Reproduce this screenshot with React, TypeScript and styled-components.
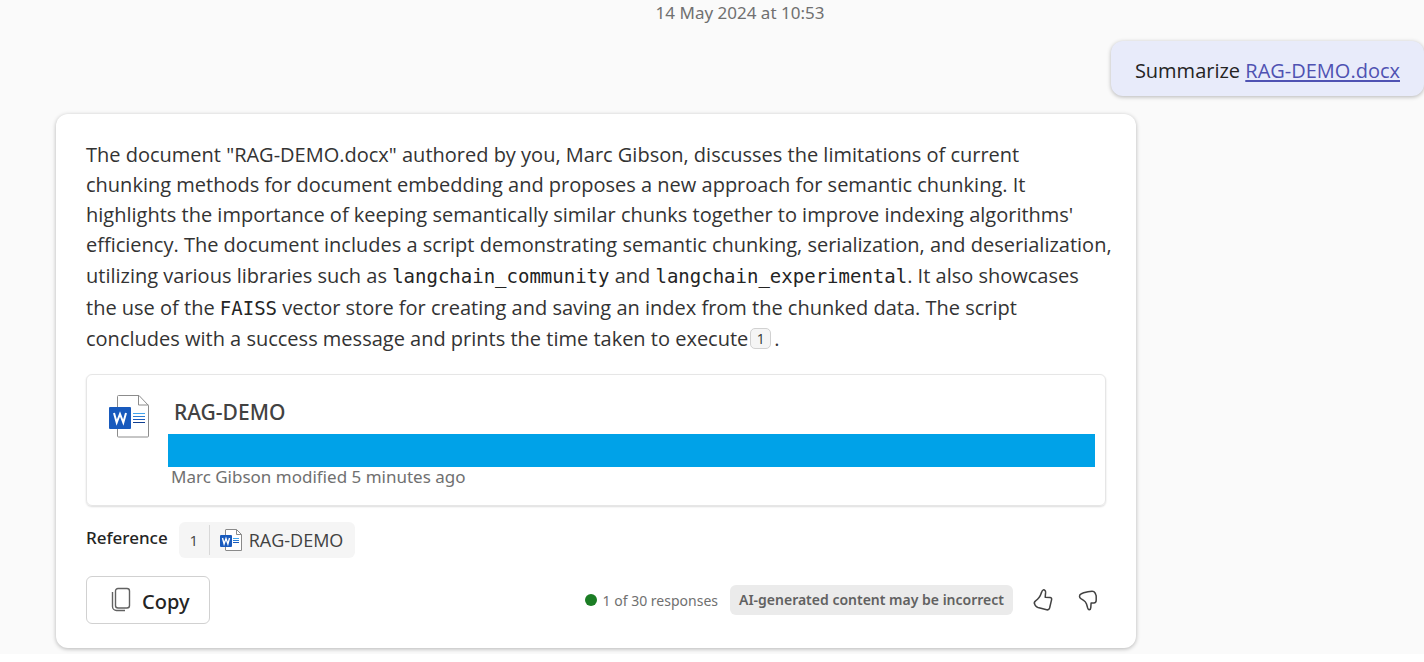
import React from "react";
import styled, { createGlobalStyle } from "styled-components";

const Global = createGlobalStyle`
  * { box-sizing: border-box; }
  html { background: #ffffff; }
  body { margin: 0; font-family: "Noto Sans", "Open Sans", sans-serif; color: #242424; }
`;

const Chat = styled.main`
  display: flex;
  flex-direction: column;
  background: #fafafa;
  padding: 0 0 6px 56px;
`;

const Stamp = styled.time`
  align-self: center;
  margin-right: 56px;
  padding-left: 56px;
  font-size: 17px;
  line-height: 26px;
  color: #707070;
`;

const Prompt = styled.div`
  align-self: flex-end;
  margin-top: 15px;
  padding: 17px 24px 12px;
  border-radius: 12px;
  background: #e8ebfa;
  box-shadow: 0 1px 4px rgba(0, 0, 0, 0.28);
  font-family: "Open Sans", sans-serif;
  font-size: 20px;
  line-height: 26px;
`;

const DocLink = styled.a`
  color: #4f52b2;
  text-decoration: underline;
  text-decoration-thickness: 2px;
  text-underline-offset: 2px;
`;

const Answer = styled.article`
  width: 100%;
  max-width: 1080px;
  margin-top: 18px;
  padding: 26px 30px 24px;
  border-radius: 12px;
  background: #ffffff;
  box-shadow: 0 1px 4px rgba(0, 0, 0, 0.28);
`;

const Summary = styled.p`
  margin: 0 -16px 0 0;
  font-family: "Open Sans", sans-serif;
  font-size: 20px;
  line-height: 30px;
  color: #333333;
`;

const Code = styled.code`
  font-family: "DejaVu Sans Mono", monospace;
  font-size: 19px;
  line-height: 32px;
  color: #242424;
`;

const Cite = styled.sup`
  display: inline-block;
  width: 21px;
  margin: 0 3px 0 2px;
  border: 1px solid #d1d1d1;
  border-radius: 5px;
  background: #f5f5f5;
  font-size: 14px;
  line-height: 19px;
  text-align: center;
  vertical-align: 2px;
`;

const FileCard = styled.section`
  display: flex;
  gap: 18px;
  margin-top: 20px;
  padding: 20px 10px 18px 22px;
  border: 1px solid #e6e6e6;
  border-radius: 6px;
  box-shadow: 0 1px 2px rgba(0, 0, 0, 0.14);
`;

const FileBody = styled.div`
  flex: 1;
  display: flex;
  flex-direction: column;
`;

const FileTitle = styled.h2`
  margin: 0 0 9px;
  padding: 4px 6px 0;
  font-size: 21px;
  line-height: 26px;
  font-weight: 500;
  color: #424242;
`;

const Bar = styled.div`
  height: 33px;
  background: #00a2e8;
`;

const Modified = styled.p`
  margin: 0;
  padding-left: 3px;
  font-size: 17px;
  line-height: 20px;
  color: #707070;
`;

const References = styled.div`
  display: flex;
  gap: 11px;
  margin-top: 16px;
`;

const RefLabel = styled.span`
  font-size: 17px;
  line-height: 32px;
  font-weight: 500;
`;

const RefChip = styled.a`
  display: flex;
  align-items: center;
  height: 36px;
  padding-right: 12px;
  border-radius: 6px;
  background: #f5f5f5;
  color: #424242;
  font-family: "Open Sans", sans-serif;
  font-size: 18px;
  text-decoration: none;
`;

const RefNumber = styled.span`
  width: 31px;
  margin-right: 10px;
  border-right: 1px solid #d8d8d8;
  font-size: 15px;
  line-height: 30px;
  text-align: center;
`;

const RefName = styled.span`
  margin-left: 7px;
`;

const Footer = styled.footer`
  display: flex;
  align-items: center;
  justify-content: space-between;
  margin-top: 18px;
`;

const CopyButton = styled.button`
  display: flex;
  align-items: center;
  gap: 10px;
  height: 48px;
  padding: 2px 20px 0 24px;
  border: 1px solid #d1d1d1;
  border-radius: 6px;
  background: #ffffff;
  color: #242424;
  font: 500 20px "Noto Sans", sans-serif;

  svg {
    margin-bottom: 2px;
  }
`;

const Meta = styled.div`
  display: flex;
  align-items: center;
`;

const Dot = styled.span`
  width: 12px;
  height: 12px;
  margin-right: 6px;
  border-radius: 50%;
  background: #1b7d24;
`;

const Count = styled.span`
  font-size: 14px;
  color: #707070;
`;

const Notice = styled.span`
  margin: 0 18px 0 12px;
  padding: 0 9px;
  border-radius: 6px;
  background: #ebebeb;
  color: #616161;
  font-size: 14px;
  line-height: 30px;
  font-weight: 600;
`;

const IconButton = styled.button`
  display: flex;
  padding: 0;
  margin: 0 9px 0 0;
  border: 0;
  background: none;

  & + & {
    margin: 0 6px 0 12px;
  }
`;

function WordIcon({ small }: { small?: boolean }) {
  return small ? (
    <svg width="22" height="22" viewBox="0 0 22 22" aria-hidden="true">
      <path d="M6 .5h10.500l5 5v16H6a.5.5 0 0 1-.5-.5V1a.5.5 0 0 1 .5-.5z" fill="#fff" stroke="#8a8a8a" />
      <path d="M16.500.5v5h5" fill="none" stroke="#8a8a8a" />
      <path d="M13 9.500h6" stroke="#41a5ee" />
      <path d="M13 11.500h6" stroke="#2b7cd3" />
      <path d="M13 13.500h6" stroke="#185abd" />
      <rect y="6" width="12" height="12" rx="1" fill="#185abd" />
      <path d="M2.500 9l1.600 6L6 9.600 7.900 15l1.600-6" fill="none" stroke="#fff" strokeWidth="1.400" />
    </svg>
  ) : (
    <svg width="41" height="43" viewBox="0 0 41 43" aria-hidden="true">
      <path d="M9.500.5h20.500l9.500 10V41a1 1 0 0 1-1 1H9.500a1 1 0 0 1-1-1V1.500a1 1 0 0 1 1-1z" fill="#fff" stroke="#8c8c8c" />
      <path d="M29.500.5v9.500h10" fill="none" stroke="#8c8c8c" />
      <path d="M24 18.500h12" stroke="#41a5ee" />
      <path d="M24 21.500h12" stroke="#2b7cd3" />
      <path d="M24 24.500h12" stroke="#185abd" />
      <path d="M24 27.500h12" stroke="#103f91" />
      <rect y="12" width="22" height="22" rx="1" fill="#185abd" />
      <path d="M5 18l2.700 9.500L11 19l3.300 8.500L17 18" fill="none" stroke="#fff" strokeWidth="2" />
    </svg>
  );
}

function CopyIcon() {
  return (
    <svg width="21" height="26" viewBox="0 0 21 26" fill="none" stroke="#616161" strokeWidth="1.400" aria-hidden="true">
      <rect x="4.500" y="1.500" width="14" height="19.500" rx="2.500" />
      <path d="M1.500 5v14.500a4 4 0 0 0 4 4H14" />
    </svg>
  );
}

function ThumbUp() {
  return (
    <svg width="24" height="24" viewBox="0 0 24 24" fill="none" stroke="#424242" strokeWidth="1.500" strokeLinejoin="round" aria-hidden="true">
      <path d="M12.200 1.900c1.500-.3 2.500.8 2.400 2.500l-.4 4.800 4.800.3c1.300.1 1.900.9 1.600 2.200l-2 8.300c-.4 1.500-1.400 2.100-2.900 1.800l-8.700-2.300c-.9-.3-1.600-.7-2.200-1.500l-.9-1.300c-.9-1.400-.6-2.900.7-3.800C8.300 10.500 9.300 8.400 10.500 4.600c.4-1.400.7-2.500 1.700-2.700z" />
    </svg>
  );
}

function ThumbDown() {
  return (
    <svg width="24" height="24" viewBox="0 0 24 24" fill="none" stroke="#424242" strokeWidth="1.500" strokeLinejoin="round" aria-hidden="true">
      <path d="M13.200 21.800c1-.1 1.500-.9 1.600-2.200l.3-4.600h2.700c1.500 0 2.400-1 2.400-2.700V8.500c0-.7-.1-1.300-.4-1.900l-.8-1.700c-.6-1.200-1.500-1.700-2.900-1.700-2.900 0-5.700.6-8.400 1.600L5.400 5.700c-1.300.5-1.900 1.300-1.900 2.500 0 1.100.5 1.900 1.400 2.500l2.700 1.600c1.500.9 2.300 2 2.900 3.700l1.200 4c.4 1.200.7 1.900 1.500 1.800z" />
    </svg>
  );
}

export default function App() {
  return (
    <>
      <Global />
      <Chat>
        <Stamp dateTime="2024-05-14T10:53">14 May 2024 at 10:53</Stamp>
        <Prompt>
          Summarize <DocLink href="#doc">RAG-DEMO.docx</DocLink>
        </Prompt>
        <Answer>
          <Summary>
            The document "RAG-DEMO.docx" authored by you, Marc Gibson, discusses the limitations of current
            <br />
            chunking methods for document embedding and proposes a new approach for semantic chunking. It
            <br />
            highlights the importance of keeping semantically similar chunks together to improve indexing algorithms'
            <br />
            efficiency. The document includes a script demonstrating semantic chunking, serialization, and deserialization,
            <br />
            utilizing various libraries such as <Code>langchain_community</Code> and <Code>langchain_experimental</Code>. It also showcases
            <br />
            the use of the <Code>FAISS</Code> vector store for creating and saving an index from the chunked data. The script
            <br />
            concludes with a success message and prints the time taken to execute<Cite>1</Cite>.
          </Summary>
          <FileCard>
            <WordIcon />
            <FileBody>
              <FileTitle>RAG-DEMO</FileTitle>
              <Bar />
              <Modified>Marc Gibson modified 5 minutes ago</Modified>
            </FileBody>
          </FileCard>
          <References>
            <RefLabel>Reference</RefLabel>
            <RefChip href="#doc">
              <RefNumber>1</RefNumber>
              <WordIcon small />
              <RefName>RAG-DEMO</RefName>
            </RefChip>
          </References>
          <Footer>
            <CopyButton type="button">
              <CopyIcon />
              Copy
            </CopyButton>
            <Meta>
              <Dot />
              <Count>1 of 30 responses</Count>
              <Notice>AI-generated content may be incorrect</Notice>
              <IconButton type="button" aria-label="Like"><ThumbUp /></IconButton>
              <IconButton type="button" aria-label="Dislike"><ThumbDown /></IconButton>
            </Meta>
          </Footer>
        </Answer>
      </Chat>
    </>
  );
}
